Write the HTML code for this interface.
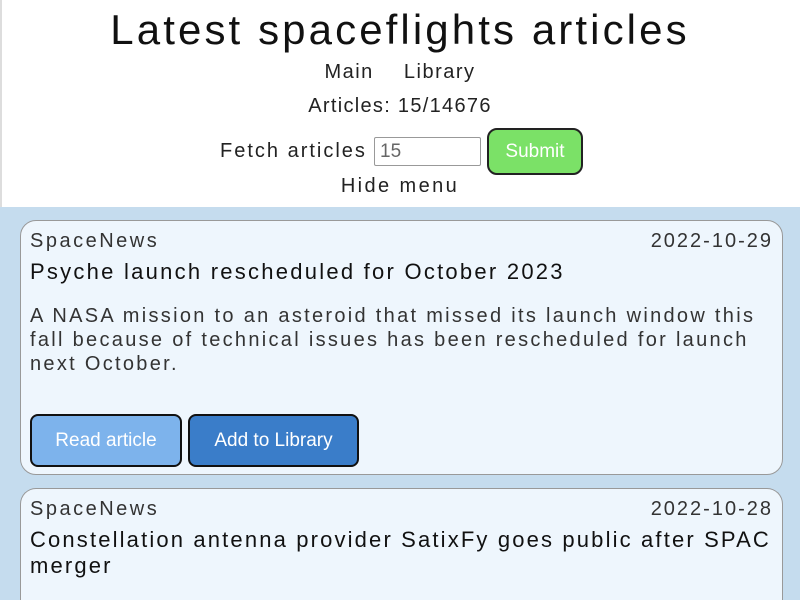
<!DOCTYPE html>
<html><head><meta charset="utf-8"><style>
*{margin:0;padding:0;box-sizing:border-box}
html,body{width:800px;height:600px;overflow:hidden}
body{background:#fff;font-family:"Liberation Sans",sans-serif;position:relative}
.t{position:absolute;left:0;width:800px;text-align:center;color:#111;white-space:nowrap}
#blue{position:absolute;left:0;top:207px;width:800px;height:393px;background:#c5dcee}
#lb{position:absolute;left:0;top:0;width:2px;height:207px;background:#ddd}
.card{position:absolute;left:20px;width:763px;background:#eef6fd;border:1px solid #999;border-radius:16px;overflow:hidden}
.a{position:absolute;white-space:nowrap}
.s{font-size:20px;color:#333;letter-spacing:2px}
.btn{position:absolute;top:193px;height:53px;border:2px solid #111;border-radius:8px;color:#fff;font-size:19px;text-align:center;line-height:49px}
</style></head><body>
<div id="lb"></div>
<div class="t" style="top:6px;font-size:42px;letter-spacing:3.1px">Latest spaceflights articles</div>
<div class="t" style="top:61px;font-size:20px;color:#222;letter-spacing:1.5px;word-spacing:8px">Main &nbsp;Library</div>
<div class="t" style="top:95px;font-size:20px;color:#222;letter-spacing:1.3px">Articles: 15/14676</div>
<div class="a" style="left:220px;top:140px;font-size:20px;color:#222;letter-spacing:2px">Fetch articles</div>
<div class="a" style="left:374px;top:137px;width:107px;height:29px;border:1px solid #999;border-radius:2px;background:#fff;font-size:19px;color:#666;padding-left:5px;line-height:27px">15</div>
<div class="a" style="left:487px;top:128px;width:96px;height:47px;background:#7be167;border:2px solid #222;border-radius:10px;color:#fff;font-size:19px;text-align:center;line-height:43px">Submit</div>
<div class="t" style="top:175px;font-size:20px;color:#222;letter-spacing:2.4px">Hide menu</div>
<div id="blue"></div>
<div class="card" style="top:220px;height:255px">
<div class="a s" style="left:9px;top:9px;letter-spacing:2.5px">SpaceNews</div>
<div class="a s" style="right:9px;top:9px;letter-spacing:2px">2022-10-29</div>
<div class="a" style="left:9px;top:38px;font-size:22px;color:#111;letter-spacing:2.25px">Psyche launch rescheduled for October 2023</div>
<div class="a" style="left:9px;top:83px;font-size:20px;color:#333;line-height:24px;letter-spacing:2.3px">A NASA mission to an asteroid that missed its launch window this<br>fall because of technical issues has been rescheduled for launch<br>next October.</div>
<div class="btn" style="left:9px;width:152px;background:#7db3ec">Read article</div>
<div class="btn" style="left:167px;width:171px;background:#3a7dc9">Add to Library</div>
</div>
<div class="card" style="top:488px;height:112px;border-bottom:none;border-radius:16px 16px 0 0">
<div class="a s" style="left:9px;top:9px;letter-spacing:2.5px">SpaceNews</div>
<div class="a s" style="right:9px;top:9px;letter-spacing:2px">2022-10-28</div>
<div class="a" style="left:9px;top:38px;font-size:22px;color:#111;line-height:26px;letter-spacing:2.15px">Constellation antenna provider SatixFy goes public after SPAC<br>merger</div>
</div>
</body></html>
